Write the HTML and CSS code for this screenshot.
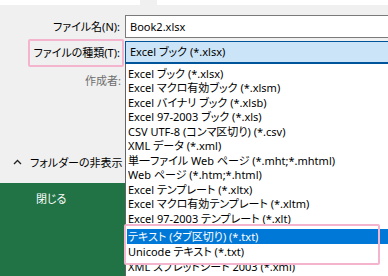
FILE: index.html
```html
<!DOCTYPE html>
<html lang="ja">
<head>
<meta charset="utf-8">
<link rel="stylesheet" href="styles.css">
</head>
<body>
<div class="window">
  <div class="topstrip">
    <div class="strip strip-a"></div>
    <div class="strip strip-b"></div>
  </div>
  <div class="main">
    <div class="left">
      <div class="label">ファイル名(N):</div>
      <div class="label second">ファイルの種類(T):</div>
      <div class="author">作成者:</div>
      <div class="folder">
        <svg class="chev" width="9" height="6" viewBox="0 0 9 6"><polyline points="1,5 4.5,1.5 8,5" fill="none" stroke="#222" stroke-width="1.3"/></svg>
        <span>フォルダーの非表示</span>
      </div>
      <div class="backstage"><span>閉じる</span></div>
    </div>
    <div class="right">
      <div class="input">Book2.xlsx</div>
      <div class="combo">Excel ブック (*.xlsx)</div>
      <ul class="list">
        <li>Excel ブック (*.xlsx)</li>
        <li>Excel マクロ有効ブック (*.xlsm)</li>
        <li>Excel バイナリ ブック (*.xlsb)</li>
        <li>Excel 97-2003 ブック (*.xls)</li>
        <li>CSV UTF-8 (コンマ区切り) (*.csv)</li>
        <li>XML データ (*.xml)</li>
        <li>単一ファイル Web ページ (*.mht;*.mhtml)</li>
        <li>Web ページ (*.htm;*.html)</li>
        <li>Excel テンプレート (*.xltx)</li>
        <li>Excel マクロ有効テンプレート (*.xltm)</li>
        <li class="cut">Excel 97-2003 テンプレート (*.xlt)</li>
        <li class="gap"></li>
        <li class="sel">テキスト (タブ区切り) (*.txt)</li>
        <li class="uni">Unicode テキスト (*.txt)</li>
        <li class="gap2"></li>
        <li class="xml"><span>XML スプレッドシート 2003 (*.xml)</span></li>
      </ul>
    </div>
  </div>
  <div class="mark mark-label"></div>
  <div class="mark mark-list"></div>
</div>
</body>
</html>
```

FILE: styles.css
```css
html, body {
  margin: 0;
  padding: 0;
}
body {
  font-family: "Noto Sans", "Noto Sans CJK JP", sans-serif;
  font-feature-settings: "palt";
  font-size: 11px;
  color: #000;
  background: #f0f0f0;
}
.window {
  position: relative;
  width: 388px;
  height: 276px;
  overflow: hidden;
  background: #f0f0f0;
}
.topstrip {
  display: flex;
  height: 5px;
  gap: 17px;
}
.strip {
  background: #fff;
}
.strip-a {
  width: 140px;
}
.strip-b {
  flex: 1;
}
.main {
  display: flex;
  height: 271px;
}
.left {
  width: 125px;
  display: flex;
  flex-direction: column;
}
.label {
  height: 23px;
  line-height: 23px;
  text-align: right;
  padding-right: 5px;
  margin-top: 10px;
  white-space: nowrap;
}
.label.second {
  margin-top: 3px;
}
.author {
  margin-top: 9px;
  height: 16px;
  line-height: 16px;
  text-align: right;
  padding-right: 4px;
  color: #6d6d6d;
}
.folder {
  margin-top: auto;
  margin-bottom: 11px;
  height: 20px;
  display: flex;
  align-items: center;
  gap: 8px;
  padding-left: 13px;
  white-space: nowrap;
}
.chev {
  display: block;
}
.backstage {
  height: 93px;
  box-sizing: border-box;
  background: #217346;
  color: #fff;
  padding: 8px 0 0 36px;
  line-height: 16px;
}
.right {
  flex: 1;
  display: flex;
  flex-direction: column;
  min-width: 0;
}
.input {
  margin-top: 10px;
  height: 23px;
  box-sizing: border-box;
  border: 1px solid #7a7a7a;
  border-right: none;
  background: #fff;
  padding-left: 4px;
  line-height: 21px;
  white-space: nowrap;
}
.combo {
  margin-top: 3px;
  height: 23px;
  box-sizing: border-box;
  background: #cce4f7;
  border: 1px solid #005499;
  border-bottom-width: 2px;
  border-right: none;
  padding-left: 4px;
  line-height: 20px;
  white-space: nowrap;
}
.list {
  flex: 1;
  margin: 0;
  padding: 2.5px 0 0 2px;
  list-style: none;
  background: #fff;
  border-left: 1px solid #646464;
  overflow: hidden;
}
.list li {
  height: 14.5px;
  line-height: 14.5px;
  white-space: nowrap;
  overflow: hidden;
}
.list li.cut {
  height: 12.5px;
}
.list li.gap {
  height: 5px;
}
.list li.sel {
  height: 15px;
  line-height: 15px;
  margin-left: -1px;
  padding-left: 1px;
  background: #0078d7;
  color: #fff;
}
.list li.uni {
  height: 15px;
  line-height: 15px;
}
.list li.gap2 {
  height: 6px;
}
.list li.xml {
  height: 14px;
}
.list li.xml span {
  display: block;
  margin-top: -5px;
}
.mark {
  position: absolute;
  box-sizing: border-box;
  border: 2.7px solid #f4b4cd;
  border-radius: 2px;
}
.mark-label {
  left: 28px;
  top: 39px;
  width: 96px;
  height: 28px;
}
.mark-list {
  left: 124px;
  top: 224px;
  width: 256px;
  height: 41px;
}
```
